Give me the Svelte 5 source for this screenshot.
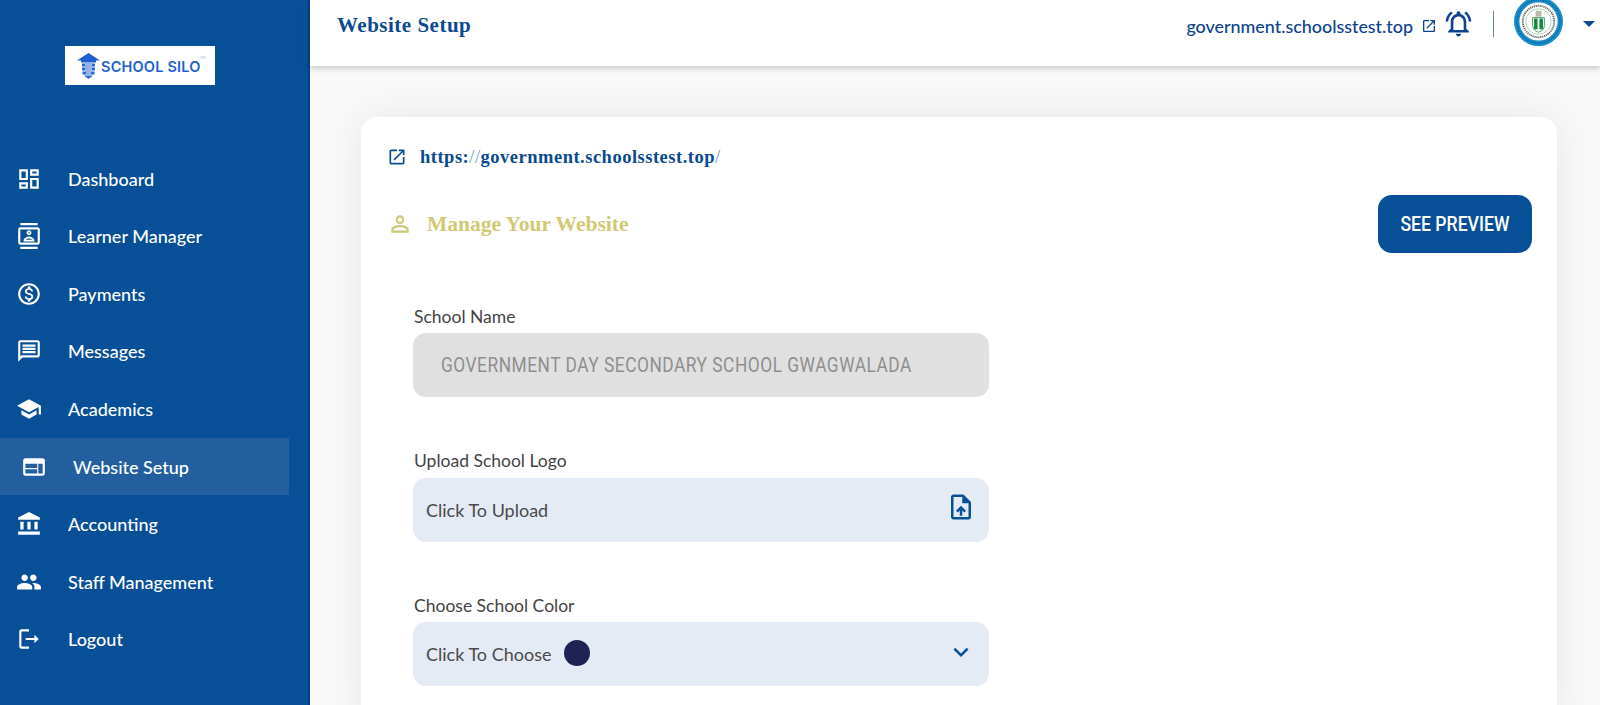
<script>
  const ic = {
    dash: "M19 5v2h-4V5h4M9 5v6H5V5h4m10 8v6h-4v-6h4M9 17v2H5v-2h4M21 3h-8v6h8V3zM11 3H3v10h8V3zm10 8h-8v10h8V11zm-10 4H3v6h8v-6z",
    learner: "M20 0H4v2h16V0zM4 24h16v-2H4v2zM20 4H4c-1.1 0-2 .9-2 2v12c0 1.1.9 2 2 2h16c1.1 0 2-.9 2-2V6c0-1.1-.9-2-2-2zm0 14H4V6h16v12zm-8-6.75c1.24 0 2.25-1.01 2.25-2.25S13.24 6.75 12 6.75 9.75 7.76 9.75 9s1.01 2.25 2.25 2.25zm0-3c.41 0 .75.34.75.75s-.34.75-.75.75-.75-.34-.75-.75.34-.75.75-.75zM17 15.99c0-2.5-3.97-3.58-5-3.58s-5 1.08-5 3.58V17h10v-1.01zm-8.19-.49c.61-.52 2.03-1.09 3.19-1.09 1.17 0 2.59.57 3.19 1.09H8.81z",
    pay: "M12 2C6.48 2 2 6.48 2 12s4.48 10 10 10 10-4.48 10-10S17.52 2 12 2zm0 18c-4.41 0-8-3.59-8-8s3.59-8 8-8 8 3.59 8 8-3.59 8-8 8zm.31-8.86c-1.77-.45-2.34-.94-2.34-1.67 0-.84.79-1.43 2.1-1.43 1.38 0 1.9.66 1.94 1.64h1.71c-.05-1.34-.87-2.57-2.49-2.97V5H10.9v1.69c-1.51.32-2.72 1.3-2.72 2.81 0 1.79 1.49 2.69 3.66 3.21 1.95.46 2.34 1.15 2.34 1.87 0 .53-.39 1.39-2.1 1.39-1.6 0-2.23-.72-2.32-1.64H8.04c.1 1.7 1.36 2.66 2.86 2.97V19h2.34v-1.67c1.52-.29 2.72-1.16 2.73-2.77-.01-2.2-1.9-2.96-3.66-3.42z",
    msg: "M20 2H4c-1.1 0-1.99.9-1.99 2L2 22l4-4h14c1.1 0 2-.9 2-2V4c0-1.1-.9-2-2-2zm0 14H5.17L4 17.17V4h16v12zM6 12h12v2H6zm0-3h12v2H6zm0-3h12v2H6z",
    school: "M5 13.18v4L12 21l7-3.82v-4L12 17l-7-3.82zM12 3 1 9l11 6 9-4.91V17h2V9L12 3z",
    web: "M20 4H4c-1.1 0-1.99.9-1.99 2L2 18c0 1.1.9 2 2 2h16c1.1 0 2-.9 2-2V6c0-1.1-.9-2-2-2zm-5 14H4v-4h11v4zm0-5H4V9h11v4zm5 5h-4V9h4v9z",
    bank: "M4 10h3v7H4zM10.5 10h3v7h-3zM2 19h20v3H2zM17 10h3v7h-3zM12 1 2 6v2h20V6z",
    people: "M16 11c1.66 0 2.99-1.34 2.99-3S17.66 5 16 5c-1.66 0-3 1.34-3 3s1.34 3 3 3zm-8 0c1.66 0 2.99-1.34 2.99-3S9.66 5 8 5C6.34 5 5 6.34 5 8s1.34 3 3 3zm0 2c-2.33 0-7 1.17-7 3.5V19h14v-2.5c0-2.33-4.67-3.5-7-3.5zm8 0c-.29 0-.62.02-.97.05 1.16.84 1.97 1.97 1.97 3.45V19h6v-2.5c0-2.33-4.67-3.5-7-3.5z",
    logout: "M5 5h7V3H5c-1.1 0-2 .9-2 2v14c0 1.1.9 2 2 2h7v-2H5V5zm16 7-4-4v3H9v2h8v3l4-4z",
    open: "M19 19H5V5h7V3H5c-1.11 0-2 .9-2 2v14c0 1.1.89 2 2 2h14c1.1 0 2-.9 2-2v-7h-2v7zM14 3v2h3.59l-9.83 9.83 1.41 1.41L19 6.41V10h2V3h-7z",
    person: "M12 5.9c1.16 0 2.1.94 2.1 2.1s-.94 2.1-2.1 2.1S9.9 9.16 9.9 8s.94-2.1 2.1-2.1m0 9c2.97 0 6.1 1.46 6.1 2.1v1.1H5.9V17c0-.64 3.13-2.1 6.1-2.1M12 4C9.79 4 8 5.79 8 8s1.79 4 4 4 4-1.79 4-4-1.79-4-4-4zm0 9c-2.67 0-8 1.34-8 4v3h16v-3c0-2.66-5.33-4-8-4z",
    bell: "M7.58 4.08 6.15 2.65C3.75 4.48 2.17 7.3 2.03 10.5h2c.15-2.65 1.51-4.97 3.55-6.42zm12.39 6.42h2c-.15-3.2-1.73-6.02-4.12-7.85l-1.42 1.43c2.02 1.45 3.39 3.77 3.54 6.42zM18 11c0-3.07-1.64-5.64-4.5-6.32V4c0-.83-.67-1.5-1.5-1.5s-1.5.67-1.5 1.5v.68C7.63 5.36 6 7.92 6 11v5l-2 2v1h16v-1l-2-2v-5zm-2 6H8v-6c0-2.48 1.51-4.5 4-4.5s4 2.02 4 4.5v6zm-4 5c.14 0 .27-.01.4-.04.65-.14 1.18-.58 1.44-1.18.1-.24.15-.5.15-.78h-4c.01 1.1.9 2 2.01 2z",
    upload: "M14 2H6c-1.1 0-1.99.9-1.99 2L4 20c0 1.1.89 2 1.99 2H18c1.1 0 2-.9 2-2V8l-6-6zm4 18H6V4h7v5h5v11zM8 15.01l1.41 1.41L11 14.84V19h2v-4.16l1.59 1.59L16 15.01 12.01 11 8 15.01z",
    more: "M16.59 8.59 12 13.17 7.41 8.59 6 10l6 6 6-6z"
  };
  const nav = [
    ["Dashboard", ic.dash], ["Learner Manager", ic.learner], ["Payments", ic.pay],
    ["Messages", ic.msg], ["Academics", ic.school], ["Website Setup", ic.web, true],
    ["Accounting", ic.bank], ["Staff Management", ic.people], ["Logout", ic.logout]
  ];
</script>

<div class="page">
  <aside class="side">
    <div class="logo">
      <svg class="logo-mark" viewBox="0 0 23 26" width="23" height="26">
        <path d="M11.5 0 23 7.5h-4v2H4v-2H0z" fill="#1f5fd0"/>
        <path d="M5 10.5h13v3H5zM5 14.5h13v3H5zM5.500 18.500h12v3h-12zM7 22.500h9L11.500 26z" fill="#2a66cf"/>
        <path d="M8 12h7M8 16h7M9 20h5" stroke="#fff" stroke-width="1"/>
      </svg>
      <span class="logo-text">SCHOOL SILO</span>
      <span class="tm">TM</span>
    </div>
    <nav class="nav">
      {#each nav as [label, d, active]}
        <div class="item" class:active>
          <svg class="nav-ic" viewBox="0 0 24 24"><path {d} fill="currentColor"/></svg>
          <span>{label}</span>
        </div>
      {/each}
    </nav>
  </aside>

  <div class="main">
    <header class="top">
      <h1 class="page-title">Website Setup</h1>
      <div class="top-right">
        <span class="domain">government.schoolsstest.top</span>
        <svg class="dom-ic" viewBox="0 0 24 24"><path d={ic.open} fill="currentColor"/></svg>
        <svg class="bell" viewBox="0 0 24 24"><path d={ic.bell} fill="currentColor"/></svg>
        <span class="divider"></span>
        <svg class="avatar" viewBox="0 0 50 50">
          <circle cx="25" cy="25" r="25" fill="#178ccb"/>
          <circle cx="25" cy="25" r="19.500" fill="#fff"/>
          <circle cx="25" cy="25" r="22" fill="none" stroke="#0f5f96" stroke-width="1.2" stroke-dasharray="1.500 1"/>
          <circle cx="25" cy="25" r="13" fill="none" stroke="#7fb58a" stroke-width=".6"/>
          <circle cx="25" cy="25" r="16" fill="none" stroke="#666" stroke-width="2" stroke-dasharray="1.200 .8"/>
          <path d="M22 14h6v6h-6z" fill="#b9b9a8"/>
          <path d="M19 21h12v8c0 4-3 6-6 7-3-1-6-3-6-7z" fill="#fff" stroke="#1d8a3f" stroke-width=".8"/>
          <path d="M20.500 22h3.500v11h-3.500zM26 22h3.500v11H26z" fill="#13863a"/>
        </svg>
        <span class="caret"></span>
      </div>
    </header>

    <div class="content">
      <section class="card">
        <div class="link-row">
          <svg class="link-ic" viewBox="0 0 24 24"><path d={ic.open} fill="currentColor"/></svg>
          <span class="link">https:<span class="slash">//</span>government.schoolsstest.top<span class="slash">/</span></span>
        </div>
        <div class="title-row">
          <svg class="person" viewBox="0 0 24 24"><path d={ic.person} fill="currentColor"/></svg>
          <h2 class="manage">Manage Your Website</h2>
          <button class="preview"><span>SEE PREVIEW</span></button>
        </div>
        <div class="form">
          <div class="field">
            <div class="label">School Name</div>
            <div class="input disabled"><span class="name">GOVERNMENT DAY SECONDARY SCHOOL GWAGWALADA</span></div>
          </div>
          <div class="field">
            <div class="label">Upload School Logo</div>
            <div class="input">
              <span class="value">Click To Upload</span>
              <svg class="up" viewBox="0 0 24 24"><path d={ic.upload} fill="currentColor"/></svg>
            </div>
          </div>
          <div class="field">
            <div class="label">Choose School Color</div>
            <div class="input">
              <span class="value choose">Click To Choose <i class="dot"></i></span>
              <svg class="chev" viewBox="0 0 24 24"><path d={ic.more} fill="currentColor"/></svg>
            </div>
          </div>
        </div>
      </section>
    </div>
  </div>
</div>

<style>
  :global(body) { margin: 0; background: #f9f9f9; overflow: hidden; }
  .page { display: flex; width: 1600px; height: 705px; overflow: hidden; font-family: Lato, "Liberation Sans", sans-serif; }

  .side { width: 310px; flex: none; box-sizing: border-box; background: #075097; border-right: 2px solid #03408f; color: #fff; }
  .logo { display: flex; align-items: center; box-sizing: border-box; width: 150px; height: 39px; margin: 46px 0 64.800px 65px; padding-left: 12px; background: #fff; color: #1f5fd0; position: relative; }
  .logo-mark { flex: none; }
  .logo-text { font-family: Inter, "Liberation Sans", sans-serif; font-weight: 600; font-size: 14.500px; letter-spacing: .2px; margin: 2px 0 0 1px; white-space: nowrap; }
  .tm { position: absolute; left: 135px; top: 10px; font-size: 3.500px; color: #9db4dd; font-family: "Liberation Sans", sans-serif; }
  .item { display: flex; align-items: center; gap: 26px; width: 289px; height: 57.600px; padding-left: 16px; box-sizing: border-box; font-size: 18px; font-weight: 500; }
  .item.active { padding-left: 21px; background: #235f9f; }
  .nav-ic { width: 26px; height: 26px; flex: none; }

  .main { flex: 1; min-width: 0; display: flex; flex-direction: column; }
  .top { height: 66px; flex: none; background: #fff; box-shadow: 0 2px 6px rgba(0,0,0,.22); display: flex; align-items: center; justify-content: space-between; padding: 0 5px 14px 27px; box-sizing: border-box; position: relative; }
  .page-title { margin: -2px 0 0; font-family: "Liberation Serif", serif; font-weight: 700; font-size: 21px; color: #0a4a91; letter-spacing: .5px; }
  .top-right { display: flex; align-items: center; color: #0b4390; }
  .domain { font-size: 17.900px; font-weight: 500; white-space: nowrap; }
  .dom-ic { width: 16px; height: 16px; margin: 0 0 0 8px; }
  .bell { width: 31px; height: 31px; margin: -5px 0 0 5.500px; }
  .divider { width: 1px; height: 26px; background: #5d7fae; margin: -4px 20px 0 19.500px; }
  .avatar { width: 49px; height: 49px; margin-top: -10px; }
  .caret { width: 0; height: 0; border-left: 6px solid transparent; border-right: 6px solid transparent; border-top: 6px solid #0a4a91; margin: -4px 0 0 20px; }

  .content { padding: 51px 43px 0 51px; }
  .card { background: #fff; border-radius: 16px; padding: 30px 25px 40px 26px; box-shadow: 0 0 40px rgba(0,0,0,.08); }
  .link-row { display: flex; align-items: center; height: 20px; color: #0a4a91; }
  .link-ic { width: 20px; height: 20px; flex: none; margin-right: 13px; }
  .link { font-family: "Liberation Serif", serif; font-weight: 700; font-size: 18.500px; letter-spacing: .5px; }
  .slash { color: #6d9ac9; font-weight: 400; }
  .title-row { display: flex; align-items: center; margin-top: 28px; color: #cfc872; }
  .person { width: 26px; height: 26px; flex: none; margin-right: 14px; }
  .manage { margin: 0; flex: 1; font-family: "Liberation Serif", serif; font-weight: 700; font-size: 21.500px; color: #d1ca74; }
  .preview { width: 154px; height: 58px; border: 0; border-radius: 14px; background: #075097; color: #fff; font-family: Roboto, sans-serif; font-weight: 500; font-size: 20px; padding: 0; }
  .preview span { display: inline-block; transform: scaleX(.88); white-space: nowrap; }

  .form { margin: 53.500px 0 0 26px; width: 576px; display: flex; flex-direction: column; gap: 54px; }
  .label { height: 20px; line-height: 20px; margin-bottom: 6.500px; padding-left: 1px; font-size: 17.500px; color: #444; }
  .input { height: 64px; border-radius: 13px; background: #e5ebf4; display: flex; align-items: center; justify-content: space-between; padding: 0 16px 0 14px; box-sizing: border-box; font-size: 18px; color: #4a4a4a; }
  .value { margin-left: -1px; }
  .input.disabled { background: #e0e0e0; padding-left: 28px; }
  .name { display: inline-block; font-family: Roboto, sans-serif; font-size: 20px; letter-spacing: .6px; color: #8f8f8f; white-space: nowrap; transform: scaleX(.866); transform-origin: left center; }
  .up { width: 30px; height: 30px; color: #075097; margin: -6px -3px 0 0; }
  .chev { width: 30px; height: 30px; color: #075097; margin: -4px -3px 0 0; }
  .choose { display: inline-flex; align-items: center; gap: 13px; }
  .dot { display: inline-block; width: 26px; height: 26px; border-radius: 50%; background: #1f2353; margin-top: -2px; }
</style>
